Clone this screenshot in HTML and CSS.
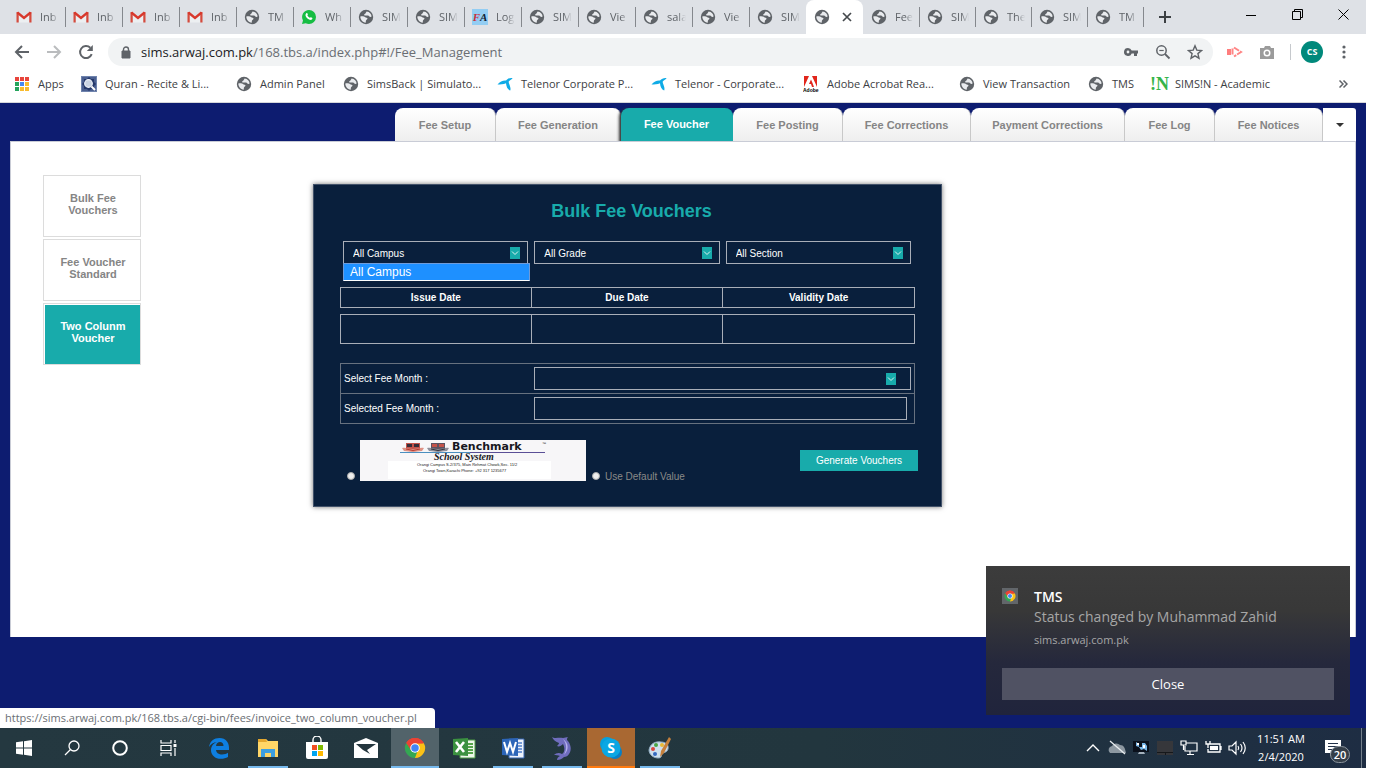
FILE: index.html
```html
<!DOCTYPE html>
<html lang="en">
<head>
<meta charset="utf-8">
<title>Fee Management</title>
<link rel="stylesheet" href="styles.css">
</head>
<body>
<svg class="sprite" aria-hidden="true">
  <symbol id="globe" viewBox="0 0 16 16"><circle cx="8" cy="8" r="7.2" fill="#5f6368"/><path d="M2.300 7.600C4 7 6.200 7.300 7.200 8.300c.8.6 2 .4 2.300 1.200.2.9-1.400 1.200-1.600 2.200l-.2 2C4.700 13.500 2.400 11 2.300 7.600zM8.600 2.400C11.600 2.700 13.500 5 13.600 7.600c-1 .7-2 .2-2.700-.6C10 6.200 8.300 6.900 6.600 6.400 5.700 6 6.300 5 7.200 4.800z" fill="#e9ebee"/></symbol>
  <symbol id="gmail" viewBox="0 0 16 16"><path d="M3 5v8.500h10V5L8 9.500z" fill="#eceff1"/><path d="M1.600 3v10.500M14.400 3v10.500" stroke="#d54b3d" stroke-width="2.200"/><path d="M1.400 3.500L8 9l6.600-5.500" stroke="#d8382c" stroke-width="2.300" fill="none"/></symbol>
  <symbol id="whatsapp" viewBox="0 0 16 16"><path d="M8 1a7 7 0 0 1 0 14 7 7 0 0 1-3.300-.8L1 15l1-3.500A7 7 0 0 1 8 1z" fill="#16bd43"/><path d="M5.300 4.300c.8-.6 1.200.2 1.500 1 .2.600-.5.9-.4 1.300.5 1 1.300 1.700 2.300 2.200.5.100.8-.8 1.300-.6l1.400.8c.3 1.500-1.500 2.200-2.700 1.800C6.400 10.200 4.900 8.500 4.500 6.600c-.1-1 .2-1.800.8-2.300z" fill="#fff"/></symbol>
  <symbol id="telenor" viewBox="0 0 16 16"><path d="M.5 8.500C3 5.500 6 4.300 9 4.600 10.500 2.700 13 1.600 15.600 2c-.8 1.300-2.400 2.300-3.900 3.400C11.500 8 14.500 11 13.200 14.600c-2.700-1-3.900-4-4.200-7.300C6.300 8.700 3.500 8.400.5 8.500z" fill="#0fabe6"/></symbol>
  <symbol id="chrome" viewBox="0 0 24 24"><path d="M12 12L2.470 6.500A11 11 0 0 1 21.530 6.500z" fill="#ea4335"/><path d="M12 12L21.530 6.500A11 11 0 0 1 12 23z" fill="#fbc116"/><path d="M12 12V23A11 11 0 0 1 2.470 6.500z" fill="#34a853"/><path d="M12 7h9.800L17 14.500 12 23l2-8z" fill="#fbc116"/><path d="M7.700 14.500L2.470 6.500 12 12l2.500 4L12 23A11 11 0 0 1 7.700 14.500z" fill="#34a853"/><path d="M12 6.800h9.700A11 11 0 0 0 2.470 6.500L7.600 14.500z" fill="#ea4335"/><circle cx="12" cy="12" r="5.200" fill="#fff"/><circle cx="12" cy="12" r="4.100" fill="#4285f4"/></symbol>
  <symbol id="arrow" viewBox="0 0 10 12"><path d="M0 0h10v12H0z" fill="#18abab"/><path d="M2 4.500l3 3 3-3" fill="none" stroke="#d8f2f0"/></symbol>
</svg>

<div class="screen">
  <header class="tabstrip">
    <div class="tabs">
      <div class="tab"><svg class="i16"><use href="#gmail"/></svg><span>Inb</span></div>
      <div class="tab"><svg class="i16"><use href="#gmail"/></svg><span>Inb</span></div>
      <div class="tab"><svg class="i16"><use href="#gmail"/></svg><span>Inb</span></div>
      <div class="tab"><svg class="i16"><use href="#gmail"/></svg><span>Inb</span></div>
      <div class="tab"><svg class="i16"><use href="#globe"/></svg><span>TM</span></div>
      <div class="tab"><svg class="i16"><use href="#whatsapp"/></svg><span>Wh</span></div>
      <div class="tab"><svg class="i16"><use href="#globe"/></svg><span>SIM</span></div>
      <div class="tab"><svg class="i16"><use href="#globe"/></svg><span>SIM</span></div>
      <div class="tab"><b class="fa"><i>F</i>A</b><span>Log</span></div>
      <div class="tab"><svg class="i16"><use href="#globe"/></svg><span>SIM</span></div>
      <div class="tab"><svg class="i16"><use href="#globe"/></svg><span>Vie</span></div>
      <div class="tab"><svg class="i16"><use href="#globe"/></svg><span>sala</span></div>
      <div class="tab"><svg class="i16"><use href="#globe"/></svg><span>Vie</span></div>
      <div class="tab last"><svg class="i16"><use href="#globe"/></svg><span>SIM</span></div>
      <div class="tab active"><svg class="i16"><use href="#globe"/></svg><button class="plain" aria-label="Close tab"><svg width="10" height="10" viewBox="0 0 10 10"><path d="M1 1l8 8M9 1L1 9" stroke="#45494d" stroke-width="1.700"/></svg></button></div>
      <div class="tab small"><svg class="i16"><use href="#globe"/></svg><span>Fee</span></div>
      <div class="tab small"><svg class="i16"><use href="#globe"/></svg><span>SIM</span></div>
      <div class="tab small"><svg class="i16"><use href="#globe"/></svg><span>The</span></div>
      <div class="tab small"><svg class="i16"><use href="#globe"/></svg><span>SIM</span></div>
      <div class="tab small"><svg class="i16"><use href="#globe"/></svg><span>TM</span></div>
      <button class="plain newtab" aria-label="New tab"><svg width="12" height="12" viewBox="0 0 12 12"><path d="M6 0v12M0 6h12" stroke="#3c4043" stroke-width="2"/></svg></button>
    </div>
    <div class="winctl">
      <button class="plain" aria-label="Minimize"><svg width="10" height="10"><path d="M0 5.500h10" stroke="#000"/></svg></button>
      <button class="plain" aria-label="Restore"><svg width="11" height="11"><path d="M.5 2.500h8v8h-8zM2.500 2.500v-2h8v8h-2" fill="none" stroke="#000"/></svg></button>
      <button class="plain" aria-label="Close window"><svg width="11" height="11"><path d="M.5.5l10 10M10.500.5l-10 10" stroke="#000"/></svg></button>
    </div>
  </header>

  <div class="toolbar">
    <button class="plain nav" aria-label="Back"><svg width="16" height="16" viewBox="0 0 16 16"><path d="M15 8H2M8 2L2 8l6 6" fill="none" stroke="#5f6368" stroke-width="2"/></svg></button>
    <button class="plain nav" aria-label="Forward"><svg width="16" height="16" viewBox="0 0 16 16"><path d="M1 8h13M8 2l6 6-6 6" fill="none" stroke="#babcbe" stroke-width="2"/></svg></button>
    <button class="plain nav" aria-label="Reload"><svg width="16" height="16" viewBox="0 0 16 16"><path d="M13.700 10.200A6 6 0 1 1 12.300 3.800" fill="none" stroke="#5f6368" stroke-width="2"/><path d="M14.800 1v6H8.800z" fill="#5f6368"/></svg></button>
    <div class="omnibox">
      <svg width="10" height="13" viewBox="0 0 10 13"><path d="M1 5h8v7H1z" fill="#5f6368" stroke="#5f6368"/><path d="M2.500 5V3.500a2.500 2.500 0 0 1 5 0V5" fill="none" stroke="#5f6368" stroke-width="1.400"/></svg>
      <p class="url"><span>sims.arwaj.com.pk</span>/168.tbs.a/index.php#!/Fee_Management</p>
      <svg class="i16" viewBox="0 0 16 16"><path d="M5 4a4 4 0 1 0 3.700 5.500H11V12h3V9.500h1v-3H8.700A4 4 0 0 0 5 4zm0 2.600a1.400 1.400 0 1 1 0 2.800 1.400 1.400 0 0 1 0-2.800z" fill="#5f6368"/></svg>
      <svg class="i16" viewBox="0 0 16 16"><path d="M10 10l4.500 4.500" stroke="#5f6368" stroke-width="1.800"/><circle cx="6.500" cy="6.500" r="4.700" fill="none" stroke="#5f6368" stroke-width="1.500"/><path d="M4.300 6.500h4.400" stroke="#5f6368" stroke-width="1.200"/></svg>
      <svg class="i16" viewBox="0 0 16 16"><path d="M8 1.800l1.800 4.300 4.700.4-3.600 3.100 1.100 4.600L8 11.800l-4 2.400 1.100-4.600L1.500 6.500l4.700-.4z" fill="none" stroke="#5f6368" stroke-width="1.400"/></svg>
    </div>
    <div class="extensions">
      <svg class="i16" viewBox="0 0 16 16"><path d="M0 5h4v6H0z" fill="#ff7d7d"/><path d="M5.500 4.500v7M7 3.500L14 8l-7 4.500" fill="none" stroke="#ff8585" stroke-width="2" stroke-dasharray="6 1"/></svg>
      <svg class="i16" viewBox="0 0 16 16"><path d="M1 4h4l1-2h5l1 2h3v11H1z" fill="#9b9b9b"/><circle cx="8" cy="9" r="3.500" fill="#fff"/><circle cx="8" cy="9" r="2" fill="#9b9b9b"/></svg>
      <i class="divider"></i>
      <span class="avatar">CS</span>
      <button class="plain" aria-label="Menu"><svg width="16" height="16" fill="#5f6368"><circle cx="8" cy="3" r="1.600"/><circle cx="8" cy="8" r="1.600"/><circle cx="8" cy="13" r="1.600"/></svg></button>
    </div>
  </div>

  <nav class="bookmarks">
    <a href="#"><svg class="i16" viewBox="0 0 16 16"><path d="M1 1h4v4H1zM6 1h4v4H6zM11 1h4v4h-4z" fill="#e8453c"/><path d="M1 6h4v4H1zM1 11h4v4H1z" fill="#25a45c"/><path d="M6 6h4v4H6z" fill="#4688f1"/><path d="M11 6h4v4h-4zM6 11h4v4H6zM11 11h4v4h-4z" fill="#f9bb2d"/><path d="M5.500 0v16M10.500 0v16M0 5.500h16M0 10.500h16" stroke="#fff"/></svg>Apps</a>
    <a href="#"><svg class="i16" viewBox="0 0 16 16"><path d="M0 0h16v16H0z" fill="#6f83ad"/><path d="M1 1h14v14H1z" fill="#4a5f90"/><path d="M8 1l2 2h3v3l2 2-2 2v3h-3l-2 2-2-2H3v-3L1 8l2-2V3h3z" fill="#24386a"/><circle cx="7.500" cy="7.500" r="3.800" fill="#c9d3e2" stroke="#eef2f8" stroke-width="1.200"/><path d="M10.500 10.500l3.500 3.500" stroke="#fff" stroke-width="2"/></svg>Quran - Recite &amp; Li...</a>
    <a href="#"><svg class="i16"><use href="#globe"/></svg>Admin Panel</a>
    <a href="#"><svg class="i16"><use href="#globe"/></svg>SimsBack | Simulato...</a>
    <a href="#"><svg class="i16"><use href="#telenor"/></svg>Telenor Corporate P...</a>
    <a href="#"><svg class="i16"><use href="#telenor"/></svg>Telenor - Corporate...</a>
    <a href="#"><svg class="i16" viewBox="0 0 16 16"><path d="M1 0h13v11H1z" fill="#e1251b"/><path d="M1 11L6 0h3l5 11h-3L9.500 7 8 3.500 6 8h2l1 3H1z" fill="#fff"/><text x="0" y="16" class="adobe">Adobe</text></svg>Adobe Acrobat Rea...</a>
    <a href="#"><svg class="i16"><use href="#globe"/></svg>View Transaction</a>
    <a href="#"><svg class="i16"><use href="#globe"/></svg>TMS</a>
    <a href="#"><b class="sims">!N</b>SIMS!N - Academic</a>
    <button class="plain" aria-label="More bookmarks"><svg width="9" height="8"><path d="M.5.5L4 4 .5 7.500M4.500.5L8 4 4.500 7.500" fill="none" stroke="#5f6368" stroke-width="1.500"/></svg></button>
  </nav>

  <main class="page">
    <nav class="menu">
      <a href="#">Fee Setup</a>
      <a href="#">Fee Generation</a>
      <a href="#" class="current">Fee Voucher</a>
      <a href="#">Fee Posting</a>
      <a href="#">Fee Corrections</a>
      <a href="#">Payment Corrections</a>
      <a href="#">Fee Log</a>
      <a href="#">Fee Notices</a>
      <button class="more" aria-label="More sections"><svg width="8" height="4"><path d="M0 0h8L4 4z" fill="#333"/></svg></button>
    </nav>
    <section class="content">
      <nav class="side">
        <a href="#">Bulk Fee Vouchers</a>
        <a href="#">Fee Voucher Standard</a>
        <a href="#" class="current">Two Colunm Voucher</a>
      </nav>
      <form class="voucher">
        <h1>Bulk Fee Vouchers</h1>
        <div class="filters">
          <div class="pick">
            <select aria-label="Campus"><option>All Campus</option></select><svg><use href="#arrow"/></svg>
            <div class="options">All Campus</div>
          </div>
          <div class="pick"><select aria-label="Grade"><option>All Grade</option></select><svg><use href="#arrow"/></svg></div>
          <div class="pick"><select aria-label="Section"><option>All Section</option></select><svg><use href="#arrow"/></svg></div>
        </div>
        <table class="dates">
          <thead><tr><th>Issue Date</th><th>Due Date</th><th>Validity Date</th></tr></thead>
          <tbody><tr><td></td><td></td><td></td></tr></tbody>
        </table>
        <table class="months">
          <tbody>
            <tr><th><label for="month">Select Fee Month :</label></th><td><div class="pick wide"><select id="month"><option></option></select><svg><use href="#arrow"/></svg></div></td></tr>
            <tr><th><label for="selected">Selected Fee Month :</label></th><td><input type="text" id="selected"></td></tr>
          </tbody>
        </table>
        <div class="actions">
          <input type="radio" name="head" id="logo-head" aria-label="Benchmark School System">
          <label for="logo-head" class="letterhead">
            <svg width="226" height="41" viewBox="0 0 226 41">
              <path d="M0 0h226v41H0z" fill="#f7f6f8"/><path d="M28 21h163v18H28z" fill="#fff"/>
              <path d="M46 3h14v6H46z" fill="#c4534a"/><path d="M47 4h5v3h-5zM54 4h5v3h-5z" fill="#352d38"/><path d="M42 8c4-1 6 1 11 1s7-2 11-1l-2 3c-4 0-5 1-9 1s-5-1-9-1z" fill="#dd9185"/><path d="M46 9q7 3 14 0" fill="none" stroke="#b9382e"/>
              <path d="M71 3h14v6H71z" fill="#5c5361"/><path d="M72 4h5v3h-5zM79 4h5v3h-5z" fill="#c4534a"/><path d="M67 8c4-1 6 1 11 1s7-2 11-1l-2 3c-4 0-5 1-9 1s-5-1-9-1z" fill="#8f8f9a"/><path d="M71 9q7 3 14 0" fill="none" stroke="#33333c"/>
              <path d="M40 12.500h145" stroke="#4b8fc0"/><path d="M110 12.500h75" stroke="#5a4f96"/>
              <text x="92" y="10" class="lh-name">Benchmark</text><text x="182" y="5" class="lh-small">™</text>
              <text x="74" y="20" class="lh-script">School System</text>
              <text x="57" y="26" class="lh-small">Orangi Campus  S-2/375, Main Rehmat Chowk,Sec. 11/2</text>
              <text x="63" y="32" class="lh-small">Orangi Town,Karachi  Phone: +92 317 1235677</text>
            </svg>
          </label>
          <input type="radio" name="head" id="default-head">
          <label for="default-head" class="default">Use Default Value</label>
          <button type="button" class="generate">Generate Vouchers</button>
        </div>
      </form>
    </section>
  </main>

  <div class="status">https://sims.arwaj.com.pk/168.tbs.a/cgi-bin/fees/invoice_two_column_voucher.pl</div>

  <aside class="toast">
    <div class="toast-body">
      <span class="toast-icon"><svg width="12" height="12"><use href="#chrome"/></svg></span>
      <div><h2>TMS</h2><p>Status changed by Muhammad Zahid</p><small>sims.arwaj.com.pk</small></div>
    </div>
    <button>Close</button>
  </aside>

  <footer class="taskbar">
    <div class="apps">
      <button aria-label="Start"><svg width="16" height="16" fill="#fff"><path d="M0 2.300L7 1.300v6.200H0zM8 1.200L16 0v7.500H8zM0 8.500h7v6.200l-7-1zM8 8.500h8V16l-8-1.200z"/></svg></button>
      <button aria-label="Search"><svg width="16" height="16" fill="none" stroke="#fff" stroke-width="1.300"><circle cx="10" cy="6" r="5"/><path d="M6.500 9.500L1 15"/></svg></button>
      <button aria-label="Cortana"><svg width="16" height="16" fill="none" stroke="#fff" stroke-width="2"><circle cx="8" cy="8" r="6.800"/></svg></button>
      <button aria-label="Task view"><svg width="17" height="16" fill="none" stroke="#fff" stroke-width="1.200"><path d="M1 0v3h10V0M1 5.500h10v5H1zM1 16v-3h10v3M15 0v3M15 8v8"/><path d="M15 4v3" stroke-width="3"/></svg></button>
    </div>
    <div class="pinned">
      <button aria-label="Edge"><svg width="22" height="22" viewBox="0 0 22 22"><path d="M1 10C2 4 6 1 11.500 1 18 1 21 6 21 10.500V13H8c.3 3 3 4.500 6 4.500 2.500 0 4.500-.7 6-1.700V20c-2 1.200-4.500 1.800-7 1.800C7 21.800 3 18 3 13.200c0-3.800 2.500-7 6-8.200C5.500 5.300 2.800 7 1 10zm7-1h7.500C15.500 6.500 14 5 12 5S8.300 6.500 8 9z" fill="#0e7fe1"/></svg></button>
      <button aria-label="Files" class="open"><svg width="22" height="20" viewBox="0 0 22 20"><path d="M1 1h8l2 2h10v16H1z" fill="#ffd667"/><path d="M1 1h8l1 3H1z" fill="#e4a72e"/><path d="M4 11h14v8h-4v-4H8v4H4z" fill="#3d9fe0"/></svg></button>
      <button aria-label="Store"><svg width="24" height="24" viewBox="0 0 24 24"><path d="M8 8V4a4 4 0 0 1 8 0v4" fill="none" stroke="#fff" stroke-width="1.400"/><path d="M1 6h22v15q0 2-2 2H3q-2 0-2-2z" fill="#fff"/><path d="M7 9h5v5H7z" fill="#f25022"/><path d="M13 9h5v5h-5z" fill="#7fba00"/><path d="M7 15h5v5H7z" fill="#00a4ef"/><path d="M13 15h5v5h-5z" fill="#ffb900"/></svg></button>
      <button aria-label="Mail"><svg width="24" height="20" viewBox="0 0 24 20"><path d="M0 5L12 0l12 5v15H0z" fill="#fff"/><path d="M2 6h20l-9 6 3 4-7-4z" fill="#24363e"/></svg></button>
      <button aria-label="Chrome" class="focus"><svg width="22" height="22"><use href="#chrome"/></svg></button>
      <button aria-label="Excel"><svg width="24" height="22" viewBox="0 0 24 22"><path d="M8 3h15v18H8z" fill="#eef7ea" stroke="#4d9a45"/><path d="M14 7h7M14 10h7M14 13h7M14 16h7" stroke="#55a34a" stroke-width="2"/><path d="M1 2l15-1v18L1 18z" fill="#3b9140"/><path d="M4 5l8 10M12 5L4 15" stroke="#fff" stroke-width="2.600"/></svg></button>
      <button aria-label="Word" class="open"><svg width="24" height="22" viewBox="0 0 24 22"><path d="M8 2h15v19H8z" fill="#eef3fc" stroke="#3565b0"/><path d="M16 6h5M16 9h5M16 12h5M16 15h5" stroke="#4d7fca" stroke-width="1.500"/><path d="M1 2l16-1v18L1 18z" fill="#2c65b8"/><path d="M3 5l3 10 3-9 3 9 3-10" fill="none" stroke="#fff" stroke-width="2"/></svg></button>
      <button aria-label="Dolphin" class="open"><svg width="24" height="24" viewBox="0 0 24 24"><path d="M2 1c3 2 7 0 11 1l5-1c-1 1-1 2-1 3 4 4 5 10 2 14-1 2-3 3-5 3-2 2-4 3-7 3 0-2 1-3 3-4-2-1-4-1-6-1 2-2 5-3 8-1 3-2 3-6 1-10-2 2-4 3-6 2 1-1 2-2 2-3C6 6 3 4 2 1z" fill="#706dbe"/><path d="M13 3c6 4 6 11 1 16 3-6 3-11-1-16z" fill="#b5b1ec"/></svg></button>
      <button aria-label="Skype" class="alert"><svg width="24" height="24" viewBox="0 0 24 24"><circle cx="8" cy="8" r="7" fill="#05a0dc"/><circle cx="16" cy="16" r="7" fill="#087fc5"/><circle cx="12" cy="12" r="9.500" fill="#0aa7e3"/><text x="12" y="17" text-anchor="middle" class="skype">S</text></svg></button>
      <button aria-label="Paint" class="open"><svg width="24" height="24" viewBox="0 0 24 24"><path d="M1 14C2 8 7 5 13 6c5 0 8 3 7 7s-5 3-6 5 0 4-4 4-9-3-9-8z" fill="#cfe0ee" stroke="#8fabc0"/><circle cx="5" cy="13" r="2" fill="#d9463e"/><circle cx="8" cy="9" r="2" fill="#4aa546"/><circle cx="14" cy="9" r="2" fill="#e8b934"/><circle cx="7" cy="18" r="2" fill="#3569c0"/><path d="M21 1l2 2-7 14-4 4 1-6z" fill="#c5803c"/></svg></button>
    </div>
    <div class="tray">
      <svg viewBox="0 0 24 24"><path d="M6 15l6-6 6 6" fill="none" stroke="#fff" stroke-width="1.400"/></svg>
      <svg viewBox="0 0 24 24"><path d="M5 17a4 4 0 0 1 2-7 5 5 0 0 1 8-1c4 0 5 3 6 8z" fill="#8c97a0"/><path d="M5 5l15 13" stroke="#e9edf0" stroke-width="1.300"/></svg>
      <svg viewBox="0 0 24 24"><path d="M4 5h16v11H4z" fill="#0a101b"/><path d="M7 6l3 2v3h3V7h3l2 3v5l-3-2-3 1-2-3-3-1z" fill="#79b5e5"/><path d="M8 7h2v2H8zM14 9h2v3h-2z" fill="#fff"/><path d="M9 18h7l-1-2h-5z" fill="#a4b1bd"/></svg>
      <svg viewBox="0 0 24 24"><path d="M4 5h16v14H4z" fill="#36373b"/><path d="M4 16h16v1H4zM12 17h1v2h-1z" fill="#16181b"/></svg>
      <svg viewBox="0 0 24 24"><path d="M9 7h11v8H8v-5M13 15v3M10 18.500h7M4 5h5v4H4zM6.500 9v5" fill="none" stroke="#fff" stroke-width="1.200"/></svg>
      <svg viewBox="0 0 24 24"><path d="M9 8h10v8H7v-3M20 10v4M5 5v3h4V5M7 8v4" fill="none" stroke="#fff" stroke-width="1.300"/><path d="M9 10h8v4H9z" fill="#fff"/></svg>
      <svg viewBox="0 0 24 24"><path d="M4 10h3l4-4v12l-4-4H4zM13 10q1.500 2 0 4M15.500 8q3 4 0 8M18 6q4.500 6 0 12" fill="none" stroke="#fff" stroke-width="1.200"/></svg>
      <p class="clock">11:51 AM<br>2/4/2020</p>
      <div class="notify"><svg width="16" height="16"><path d="M0 0h16v13H8l-3 3v-3H0z" fill="#fff"/><path d="M3 3.500h10M3 6.500h10M3 9.500h7" stroke="#23324a"/></svg><b>20</b></div>
      <i class="peek"></i>
    </div>
  </footer>
</div>
</body>
</html>
```

FILE: styles.css
```css
:root {
  --ui: "Open Sans", "Noto Sans", sans-serif;
  --app: "Liberation Sans", Arial, sans-serif;
  --teal: #18abab;
  --navy: #0d1c70;
  --ink: #091f3c;
  --line: #a9aeb8;
}
* { box-sizing: border-box; }
body { margin: 0; padding: 0 22px 2px 0; background: #fff; font-family: var(--app); }
h1, h2, p { margin: 0; }
a { text-decoration: none; color: inherit; }
.sprite { position: absolute; width: 0; height: 0; }
.i16 { width: 16px; height: 16px; flex: none; }
.plain { display: grid; place-items: center; padding: 0; border: 0; background: none; }
.screen { position: relative; display: flex; flex-direction: column; min-height: calc(100vh - 2px); }

/* Browser tabs */
.tabstrip { display: flex; justify-content: space-between; height: 34px; padding-left: 8px; background: #dee1e6; font: 11px/16px var(--ui); color: #5f6368; }
.tabs { display: flex; }
.tab { position: relative; display: flex; align-items: center; gap: 8px; width: 57px; padding-left: 8px; }
.tab span { flex: 1; overflow: hidden; white-space: nowrap; margin-right: 4px; -webkit-mask-image: linear-gradient(90deg, #000 50%, transparent 90%); mask-image: linear-gradient(90deg, #000 50%, transparent 90%); }
.tab::after { content: ""; position: absolute; right: -1px; top: 7px; width: 1px; height: 20px; background: #85888d; }
.tab.small { width: 56px; }
.tab.last::after, .tab.active::after { display: none; }
.tab.active { gap: 12px; border-radius: 8px 8px 0 0; background: #fff; }
.fa { display: grid; grid-auto-flow: column; place-content: center; width: 16px; height: 16px; background: #93cdf3; color: #123; font: italic bold 11px/16px "Liberation Serif", serif; }
.fa i { color: #c8303c; }
.newtab { width: 44px; }
.winctl { display: grid; grid-template-columns: repeat(3, 46px); height: 29px; }

/* Address bar */
.toolbar { display: flex; align-items: center; height: 36px; padding: 0 14px 0 6px; background: #fff; }
.nav { width: 32px; height: 32px; }
.omnibox { display: flex; align-items: center; gap: 16px; flex: 1; height: 28px; margin-left: 6px; padding: 0 10px 0 13px; border-radius: 14px; background: #f1f3f4; }
.url { flex: 1; margin-left: -6px; font: 13px/20px var(--ui); color: #6a6e73; white-space: nowrap; }
.url span { color: #202124; }
.extensions { display: flex; align-items: center; gap: 12px; padding-left: 14px; }
.extensions .i16 + .i16 { margin-left: 4px; }
.divider { width: 1px; height: 16px; margin-left: 3px; background: #c6c9cd; }
.avatar { display: grid; place-items: center; width: 22px; height: 22px; margin: 0 1px 0 -2px; border-radius: 50%; background: #00897b; color: #fff; font: bold 9px/12px var(--ui); }

/* Bookmarks */
.bookmarks { display: grid; grid-template-columns: 67px 155px 107px 154px 154px 152px 156px 129px 62px 1fr 46px; align-items: center; height: 33px; padding: 0 0 5px 14px; border-bottom: 1px solid #d5d7db; font: 11px/16px var(--ui); color: #3c4043; white-space: nowrap; }
.bookmarks a { display: flex; align-items: center; gap: 8px; }
.adobe { font: bold 5px var(--app); }
.sims { color: #35b44a; font: bold 18px/16px "Liberation Serif", serif; width: 17px; }

/* Application */
.page { flex: 1; display: flex; flex-direction: column; padding: 5px 10px 91px; background: var(--navy); }
.menu { display: grid; grid-template-columns: 101px 125px 112px 110px 128px 154px 90px 108px 33px; justify-content: end; height: 33px; font: bold 11px/34px var(--app); color: #858585; text-align: center; }
.menu a { border-right: 1px solid #c8c8c8; border-radius: 8px 8px 0 0; background: linear-gradient(#fff, #eee); white-space: nowrap; }
.menu .current { background: var(--teal); color: #fff; border-color: var(--teal); box-shadow: -2px 1px 3px #333; line-height: 32px; }
.more { padding: 0; border: 0; border-radius: 0 3px 0 0; background: #fff; display: grid; place-items: center; }
.content { flex: 1; display: flex; align-items: flex-start; gap: 172px; padding: 33px 32px 100px; border: 1px solid #c9ccd6; border-bottom: 0; background: #fff; }
.side { display: grid; gap: 2px; width: 98px; font: bold 11px/12px var(--app); color: #858585; text-align: center; }
.side a { height: 62px; padding: 16px 13px 0 15px; border: 1px solid #dcdcdc; }
.side .current { background: var(--teal) padding-box; color: #fff; box-shadow: inset 1px 1px #fff; }

.voucher { width: 629px; margin-top: 9px; padding-bottom: 25px; border: 1px solid #42526a; background: var(--ink); color: #fff; box-shadow: 0 0 5px #777; }
.voucher h1 { padding: 15px 0 0 8px; font: bold 18px/22px var(--app); color: var(--teal); text-align: center; }
.filters { display: grid; grid-template-columns: repeat(3, 1fr); gap: 6px; padding: 19px 30px 0 29px; }
.pick { position: relative; }
.pick select, .months input { display: block; width: 100%; height: 23px; padding: 0 9px; border: 1px solid var(--line); border-radius: 0; background: var(--ink); color: #fff; font: 10px/20px var(--app); appearance: none; }
.filters select { padding-top: 2px; }
.pick > svg { position: absolute; top: 6px; right: 8px; width: 10px; height: 12px; pointer-events: none; }
.pick.wide > svg { right: 15px; }
.options { position: absolute; top: 22px; left: 0; right: -2px; padding-left: 6px; border: 1px solid #6f9bd8; border-bottom-color: #fff; background: #1e90ff; font: 12px/16px var(--app); z-index: 1; }
.voucher table { width: 575px; margin-left: 26px; table-layout: fixed; font: bold 10px/12px var(--app); }
.dates { margin-top: 17px; border-collapse: separate; border-spacing: 0 6px; }
.dates th, .dates td { height: 21px; padding: 0; border: 1px solid var(--line); border-left: 0; }
.dates td { height: 30px; }
.dates th:first-child, .dates td:first-child { border-left: 1px solid var(--line); }
.months { margin-top: 13px; border-collapse: collapse; }
.months tr { height: 30px; border: 1px solid #67717f; }
.months th { width: 193px; padding: 0 3px; text-align: left; font: 10px/12px var(--app); }
.months td { padding: 3px 3px 3px 0; }
.months input { width: calc(100% - 4px); }
.actions { display: flex; align-items: flex-end; padding: 16px 23px 0 33px; }
.actions input { width: 8px; height: 8px; margin: 0 5px 1px 0; appearance: none; border: 1px solid #aaa; border-radius: 50%; background: #eee; }
.letterhead { margin-right: 6px; }
.letterhead svg { display: block; }
.actions .default { font: 10px/8px var(--app); color: #8a8a88; }
.lh-name { font: bold 11px "DejaVu Sans", sans-serif; fill: #18181e; }
.lh-script { font: italic bold 10px "Liberation Serif", serif; fill: #18181e; }
.lh-small { font: 4px var(--app); fill: #222; }
.generate { align-self: center; width: 118px; height: 21px; margin-left: auto; padding: 0; border: 0; background: var(--teal); color: #fff; font: 10px/20px var(--app); }

/* Overlays */
.status { position: absolute; left: 0; bottom: 40px; padding: 0 18px 0 5px; border-radius: 0 4px 0 0; background: #fff; color: #6a6e73; font: 11px/20px var(--ui); }
.toast { position: absolute; right: 16px; bottom: 53px; width: 364px; padding: 21px 16px 15px; background: linear-gradient(#3c3c3c, #383838 30%, #25283c 65%, #20243c); color: #a6a6a6; font: 14px/20px var(--ui); }
.toast-body { display: flex; gap: 16px; }
.toast-icon { display: grid; place-items: center; width: 16px; height: 16px; margin-top: 1px; background: #62666a; }
.toast h2 { font: 600 14px/20px var(--ui); color: #fff; }
.toast small { display: block; padding-top: 5px; font: 11px/16px var(--ui); }
.toast button { display: block; width: 100%; height: 32px; margin-top: 20px; border: 0; background: #505263; color: #fff; font: 13px/20px var(--ui); }

/* Taskbar */
.taskbar { display: flex; height: 40px; background: linear-gradient(90deg, #243840, #22363e 60%, #1e2d43); }
.apps { display: grid; grid-template-columns: repeat(4, 48px); }
.pinned { display: grid; grid-template-columns: repeat(10, 49px); padding-left: 3px; }
.taskbar button { position: relative; display: grid; place-items: center; width: 48px; padding: 0; border: 0; background: none; }
.taskbar .open::after, .taskbar .focus::after, .taskbar .alert::after { content: ""; position: absolute; left: 4px; right: 4px; bottom: 0; height: 2px; background: #76b9ed; }
.taskbar .focus { background: #52636a; }
.taskbar .alert { background: #a96832; }
.taskbar .focus::after, .taskbar .alert::after { left: 0; right: 0; }
.taskbar .alert::after { background: #ff7a0e; }
.skype { font: bold 14px var(--ui); fill: #fff; }
.tray { display: flex; align-items: center; margin-left: auto; color: #fff; }
.tray > svg { width: 24px; height: 24px; }
.clock { width: 64px; font: 11px/18px var(--ui); text-align: center; }
.notify { position: relative; width: 48px; padding-left: 12px; }
.notify svg { display: block; }
.notify b { position: absolute; left: 17px; top: 6px; width: 20px; border: 1px solid #8b949d; border-radius: 9px; background: #343e49; font: 600 11px/15px var(--ui); text-align: center; }
.peek { width: 5px; height: 40px; border-left: 1px solid #74808b; }
```
